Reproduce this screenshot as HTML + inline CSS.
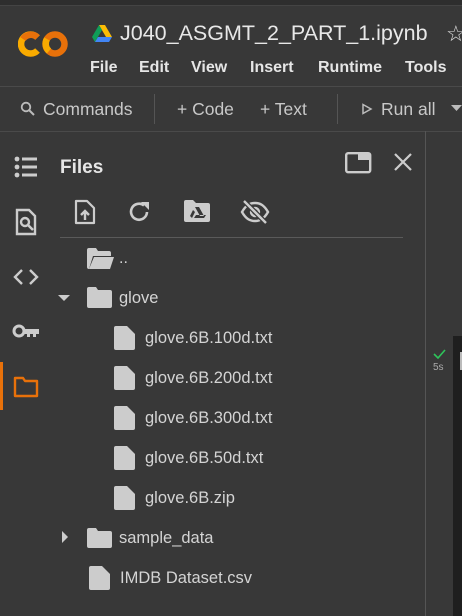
<!DOCTYPE html>
<html><head><meta charset="utf-8"><style>
*{margin:0;padding:0;box-sizing:border-box}
body{width:462px;height:616px;overflow:hidden;background:#383838;font-family:"Liberation Sans",sans-serif;color:#d6d6d6;position:relative}
.a{position:absolute;white-space:nowrap}
.t{font-size:16px;color:#d4d4d4}
.m{font-size:16px;color:#e6e6e6;font-weight:bold;top:59px}
</style></head><body>
<div class="a" style="left:0;top:0;width:462px;height:5px;background:#2e2e2e"></div>
<div class="a" style="left:0;top:5px;width:462px;height:1px;background:#444"></div>
<!-- logo -->
<svg class="a" style="left:18px;top:29px" width="52" height="30" viewBox="0 0 52 30">
<path d="M19.5 8.5 A9.5 9.5 0 1 0 19.5 21.5" fill="none" stroke="#f9ab00" stroke-width="6.5"/>
<path d="M19.5 8.5 A9.5 9.5 0 0 0 5 10" fill="none" stroke="#e8710a" stroke-width="6.5"/>
<circle cx="37" cy="15" r="9.5" fill="none" stroke="#e8710a" stroke-width="6.5"/>
<path d="M29 10 A9.5 9.5 0 0 0 31 22" fill="none" stroke="#f9ab00" stroke-width="6.5"/>
</svg>
<svg class="a" style="left:92px;top:25px" width="20" height="18" viewBox="0 0 20 18">
<path d="M7 0h6l7 12h-6z" fill="#fbbc04"/><path d="M7 0L0 12l3 5 7-12z" fill="#0f9d58"/><path d="M3 17h14l3-5H6z" fill="#4285f4"/></svg>
<div class="a" style="left:120px;top:21px;font-size:21.5px;color:#e8e8e8">J040_ASGMT_2_PART_1.ipynb</div>
<div class="a" style="left:446px;top:21px;font-size:22px;color:#ddd">☆</div>
<div class="a m" style="left:90px">File</div>
<div class="a m" style="left:139px">Edit</div>
<div class="a m" style="left:191px">View</div>
<div class="a m" style="left:250px">Insert</div>
<div class="a m" style="left:318px">Runtime</div>
<div class="a m" style="left:405px">Tools</div>
<div class="a" style="left:0;top:86px;width:462px;height:1px;background:#4a4a4a"></div>
<!-- toolbar -->
<svg class="a" style="left:20px;top:101px" width="16" height="16" viewBox="0 0 16 16"><circle cx="6" cy="6" r="4.3" fill="none" stroke="#bbb" stroke-width="1.8"/><path d="M9 9l5 5" stroke="#bbb" stroke-width="2"/></svg>
<div class="a t" style="left:43px;top:99px;color:#c8c8c8;font-size:17.5px">Commands</div>
<div class="a" style="left:154px;top:94px;width:1px;height:30px;background:#555"></div>
<div class="a t" style="left:177px;top:99px;color:#c8c8c8;font-size:17.5px">+ Code</div>
<div class="a t" style="left:260px;top:99px;color:#c8c8c8;font-size:17.5px">+ Text</div>
<div class="a" style="left:337px;top:94px;width:1px;height:30px;background:#555"></div>
<svg class="a" style="left:361px;top:103px" width="12" height="12" viewBox="0 0 12 12"><path d="M2 1.5L10 6 2 10.5z" fill="none" stroke="#bbb" stroke-width="1.5"/></svg>
<div class="a t" style="left:381px;top:99px;color:#c8c8c8;font-size:17.5px">Run all</div>
<svg class="a" style="left:451px;top:105px" width="11" height="8"><path d="M0 0h11L5.5 6z" fill="#bbb"/></svg>
<div class="a" style="left:0;top:131px;width:462px;height:1px;background:#4a4a4a"></div>
<div class="a" style="left:425px;top:131px;width:1px;height:485px;background:#555"></div>
<div class="a" style="left:453px;top:336px;width:9px;height:280px;background:#1f1f1f"></div>
<div class="a" style="left:460px;top:352px;width:2px;height:18px;background:#bbb"></div>
<svg class="a" style="left:433px;top:349px" width="13" height="10"><path d="M1 5l4 4 7-8" fill="none" stroke="#2ec45a" stroke-width="1.6"/></svg>
<div class="a" style="left:433px;top:362px;font-size:10px;color:#aaa">5s</div>
<!-- left activity bar -->
<svg class="a" style="left:14px;top:156px" width="24" height="22" viewBox="0 0 24 22"><g fill="#ccc"><circle cx="3" cy="3" r="2.4"/><circle cx="3" cy="11" r="2.4"/><circle cx="3" cy="19" r="2.4"/><rect x="8" y="1.5" width="15" height="3"/><rect x="8" y="9.5" width="15" height="3"/><rect x="8" y="17.5" width="15" height="3"/></g></svg>
<svg class="a" style="left:15px;top:208px" width="24" height="28" viewBox="0 0 24 28"><path d="M2 2h12l6 6v18H2z" fill="none" stroke="#ccc" stroke-width="2.4"/><circle cx="10" cy="14" r="4" fill="none" stroke="#ccc" stroke-width="2.4"/><path d="M13 17l5 5" stroke="#ccc" stroke-width="2.6"/></svg>
<svg class="a" style="left:13px;top:268px" width="26" height="18" viewBox="0 0 26 18"><path d="M9 2L2 9l7 7M17 2l7 7-7 7" fill="none" stroke="#ccc" stroke-width="2.4"/></svg>
<svg class="a" style="left:12px;top:323px" width="28" height="16" viewBox="0 0 28 16"><circle cx="7" cy="8" r="5" fill="none" stroke="#ccc" stroke-width="3"/><path d="M12 6h15v5h-3v3h-3v-3h-3v3h-3v-3h-3z" fill="#ccc"/></svg>
<div class="a" style="left:0;top:362px;width:3px;height:48px;background:#e8710a"></div>
<svg class="a" style="left:13px;top:376px" width="26" height="22" viewBox="0 0 26 22"><path d="M2 2h8l2 3h12v15H2z" fill="none" stroke="#e8710a" stroke-width="2.4" stroke-linejoin="round"/></svg>
<!-- files panel -->
<div class="a" style="left:60px;top:157px;font-size:19px;color:#e6e6e6;font-weight:bold">Files</div>
<svg class="a" style="left:345px;top:152px" width="27" height="22" viewBox="0 0 27 22"><rect x="1.2" y="1.2" width="24" height="19" rx="2" fill="none" stroke="#ccc" stroke-width="2.4"/><rect x="13" y="1" width="12" height="7" fill="#ccc"/></svg>
<svg class="a" style="left:394px;top:153px" width="18" height="18" viewBox="0 0 18 18"><path d="M1 1l16 16M17 1L1 17" stroke="#ccc" stroke-width="2.2"/></svg>
<svg class="a" style="left:74px;top:199px" width="22" height="26" viewBox="0 0 22 26"><path d="M2 2h11l7 7v15H2z" fill="none" stroke="#ccc" stroke-width="2.2" stroke-linejoin="round"/><path d="M11 21v-8M7 16l4-4 4 4" fill="none" stroke="#ccc" stroke-width="2.4"/></svg>
<svg class="a" style="left:128px;top:200px" width="24" height="24" viewBox="0 0 24 24"><path d="M19 12A8 8 0 1 1 16 5.5" fill="none" stroke="#ccc" stroke-width="2.6"/><path d="M13 2h8v8z" fill="#ccc"/></svg>
<svg class="a" style="left:184px;top:200px" width="26" height="22" viewBox="0 0 26 22"><path d="M0 2a2 2 0 0 1 2-2h7l3 3h12a2 2 0 0 1 2 2v15a2 2 0 0 1-2 2H2a2 2 0 0 1-2-2z" fill="#ccc"/><path d="M11 7h4l5 9h-4zM9 10l-3 6 2 2 3-6zM10 18h10l2-3H12z" fill="#383838"/></svg>
<svg class="a" style="left:240px;top:199px" width="30" height="26" viewBox="0 0 30 26"><path d="M2 13C6 6 10 4 15 4s9 2 13 9c-4 7-8 9-13 9S6 20 2 13z" fill="none" stroke="#ccc" stroke-width="2.4"/><circle cx="15" cy="13" r="4" fill="none" stroke="#ccc" stroke-width="2.4"/><path d="M4 2l22 22" stroke="#383838" stroke-width="5"/><path d="M4 2l22 22" stroke="#ccc" stroke-width="2.4"/></svg>
<div class="a" style="left:60px;top:237px;width:343px;height:1px;background:#5a5a5a"></div>
<!-- tree -->
<svg class="a" style="left:87px;top:248px" width="27" height="21" viewBox="0 0 27 21"><path d="M0 2a2 2 0 0 1 2-2h7l2 3h11a2 2 0 0 1 2 2v3H6L2 21H2a2 2 0 0 1-2-2z" fill="#ccc"/><path d="M7 9h20l-4 12H2z" fill="#ccc"/></svg>
<div class="a t" style="left:119px;top:250px">..</div>
<svg class="a" style="left:58px;top:295px" width="12" height="7"><path d="M0 0h12L6 6z" fill="#ccc"/></svg>
<svg class="a" style="left:87px;top:287px" width="25" height="21" viewBox="0 0 25 21"><path d="M0 2a2 2 0 0 1 2-2h7l2 3h12a2 2 0 0 1 2 2v14a2 2 0 0 1-2 2H2a2 2 0 0 1-2-2z" fill="#ccc"/></svg>
<div class="a t" style="left:119px;top:289px;font-size:16.5px">glove</div>

<svg class="a" style="left:114px;top:326px" width="21" height="24" viewBox="0 0 21 24"><path d="M2 0h11l8 8v14a2 2 0 0 1-2 2H2a2 2 0 0 1-2-2V2a2 2 0 0 1 2-2z" fill="#ccc"/></svg>
<div class="a t" style="left:145px;top:329px;font-size:16.5px">glove.6B.100d.txt</div>
<svg class="a" style="left:114px;top:366px" width="21" height="24" viewBox="0 0 21 24"><path d="M2 0h11l8 8v14a2 2 0 0 1-2 2H2a2 2 0 0 1-2-2V2a2 2 0 0 1 2-2z" fill="#ccc"/></svg>
<div class="a t" style="left:145px;top:369px;font-size:16.5px">glove.6B.200d.txt</div>
<svg class="a" style="left:114px;top:406px" width="21" height="24" viewBox="0 0 21 24"><path d="M2 0h11l8 8v14a2 2 0 0 1-2 2H2a2 2 0 0 1-2-2V2a2 2 0 0 1 2-2z" fill="#ccc"/></svg>
<div class="a t" style="left:145px;top:409px;font-size:16.5px">glove.6B.300d.txt</div>
<svg class="a" style="left:114px;top:446px" width="21" height="24" viewBox="0 0 21 24"><path d="M2 0h11l8 8v14a2 2 0 0 1-2 2H2a2 2 0 0 1-2-2V2a2 2 0 0 1 2-2z" fill="#ccc"/></svg>
<div class="a t" style="left:145px;top:449px;font-size:16.5px">glove.6B.50d.txt</div>
<svg class="a" style="left:114px;top:486px" width="21" height="24" viewBox="0 0 21 24"><path d="M2 0h11l8 8v14a2 2 0 0 1-2 2H2a2 2 0 0 1-2-2V2a2 2 0 0 1 2-2z" fill="#ccc"/></svg>
<div class="a t" style="left:145px;top:489px;font-size:16.5px">glove.6B.zip</div>

<svg class="a" style="left:62px;top:531px" width="7" height="12"><path d="M0 0v12l6-6z" fill="#ccc"/></svg>
<svg class="a" style="left:87px;top:528px" width="25" height="20" viewBox="0 0 25 20"><path d="M0 2a2 2 0 0 1 2-2h7l2 3h12a2 2 0 0 1 2 2v13a2 2 0 0 1-2 2H2a2 2 0 0 1-2-2z" fill="#ccc"/></svg>
<div class="a t" style="left:119px;top:529px;font-size:16.5px">sample_data</div>
<svg class="a" style="left:89px;top:566px" width="21" height="24" viewBox="0 0 21 24"><path d="M2 0h11l8 8v14a2 2 0 0 1-2 2H2a2 2 0 0 1-2-2V2a2 2 0 0 1 2-2z" fill="#ccc"/></svg>
<div class="a t" style="left:120px;top:569px;font-size:16.5px">IMDB Dataset.csv</div>
</body></html>
